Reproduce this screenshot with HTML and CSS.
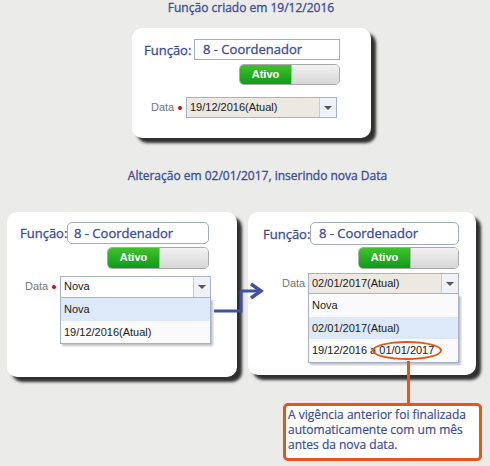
FILE: index.html
```html
<html>
  <head>
    <link rel="stylesheet" href="styles.css">
  </head>
  <body>
    <h1 class="caption caption-first">Função criado em 19/12/2016</h1>

    <section class="card card-first">
      <div class="row">
        <span class="field-label">Função:</span>
        <div class="field-input">8 - Coordenador</div>
      </div>
      <div class="switch">
        <span class="switch-on">Ativo</span>
        <span class="switch-knob"></span>
      </div>
      <div class="row data-row">
        <span class="data-label">Data <i class="required"></i></span>
        <div class="combo">
          <div class="select select-locked">
            <span class="select-text">19/12/2016(Atual)</span>
            <span class="select-btn"><b></b></span>
          </div>
        </div>
      </div>
    </section>

    <h2 class="caption caption-second">Alteração em 02/01/2017, inserindo nova Data</h2>

    <div class="pair">
      <section class="card card-left">
        <div class="row">
          <span class="field-label">Função:</span>
          <div class="field-input">8 - Coordenador</div>
        </div>
        <div class="switch">
          <span class="switch-on">Ativo</span>
          <span class="switch-knob"></span>
        </div>
        <div class="row data-row">
          <span class="data-label">Data <i class="required"></i></span>
          <div class="combo">
            <div class="select">
              <span class="select-text">Nova</span>
              <span class="select-btn"><b></b></span>
            </div>
            <ul class="options">
              <li class="picked">Nova</li>
              <li>19/12/2016(Atual)</li>
            </ul>
          </div>
        </div>
      </section>

      <section class="card card-right">
        <div class="row">
          <span class="field-label">Função:</span>
          <div class="field-input">8 - Coordenador</div>
        </div>
        <div class="switch">
          <span class="switch-on">Ativo</span>
          <span class="switch-knob"></span>
        </div>
        <div class="row data-row">
          <span class="data-label">Data <i class="required"></i></span>
          <div class="combo">
            <div class="select select-locked">
              <span class="select-text">02/01/2017(Atual)</span>
              <span class="select-btn"><b></b></span>
            </div>
            <ul class="options">
              <li>Nova</li>
              <li class="picked">02/01/2017(Atual)</li>
              <li>19/12/2016 a <span class="circled">01/01/2017</span></li>
            </ul>
          </div>
        </div>
      </section>

      <svg class="link-arrow" width="60" height="30" viewBox="0 0 60 30">
        <polyline points="0,24 27,24 27,4 46,4" fill="none" stroke="#3f51a0" stroke-width="3" />
        <polyline points="37,-3 47,4 37,11" fill="none" stroke="#3f51a0" stroke-width="3.4" />
      </svg>
    </div>

    <div class="note">
      A vigência anterior foi finalizada automaticamente com um mês antes da nova data.
    </div>
  </body>
</html>
```

FILE: styles.css
```css
body {
  margin: 0;
  height: 466px;
  overflow: hidden;
  background: #ebebea;
  font-family: "Liberation Sans", Arial, sans-serif;
}

.caption {
  margin: 0;
  font: 12px/15px "Open Sans", sans-serif;
  -webkit-text-stroke: 0.3px #3a4b9a;
  color: #3a4b9a;
  text-align: center;
}
.caption-first {
  padding-left: 12px;
}
.caption-second {
  margin-top: 30px;
  padding-left: 25px;
}

/* cards */
.card {
  box-sizing: border-box;
  background: #fff;
  border-radius: 10px;
  box-shadow: 5px 5px 3px rgba(0, 0, 0, 0.8);
}
.card-first {
  width: 239px;
  height: 110px;
  margin: 13px 0 0 132px;
  padding: 11px 0 0 12px;
}
.pair {
  position: relative;
  display: flex;
  align-items: flex-start;
  gap: 11px;
  margin-top: 29px;
  padding-left: 7px;
}
.card-left {
  width: 230px;
  height: 165px;
  padding: 10px 0 0 13px;
}
.card-right {
  width: 228px;
  height: 163px;
  padding: 10px 0 0 15px;
}

.row {
  display: flex;
  align-items: center;
}

.field-label {
  width: 50px;
  font: 13px "Open Sans", sans-serif;
  -webkit-text-stroke: 0.3px #3a4b9a;
  color: #3a4b9a;
}
.card-left .field-label,
.card-right .field-label {
  width: 47px;
}
.field-input {
  box-sizing: border-box;
  width: 146px;
  height: 21px;
  padding-left: 8px;
  border: 1px solid #a3abc4;
  font: 13px/19px "Open Sans", sans-serif;
  -webkit-text-stroke: 0.3px #3a4b9a;
  color: #3a4b9a;
}
.card-left .field-input {
  width: 142px;
  height: 22px;
  padding-left: 6px;
  line-height: 20px;
  border-radius: 5px;
}
.card-right .field-input {
  width: 149px;
  height: 23px;
  line-height: 21px;
  border-radius: 5px;
}

/* on/off switch */
.switch {
  box-sizing: border-box;
  display: flex;
  width: 101px;
  height: 21px;
  margin: 4px 0 0 95px;
  border: 1px solid #a9a9a9;
  border-radius: 5px;
  overflow: hidden;
}
.card-left .switch {
  width: 102px;
  height: 22px;
  margin: 3px 0 0 87px;
}
.card-right .switch {
  width: 101px;
  height: 22px;
  margin: 2px 0 0 95px;
}
.switch-on {
  width: 51px;
  background: linear-gradient(#41c22c, #109a1b);
  color: #fff;
  font: bold 11px/19px "Liberation Sans", Arial, sans-serif;
  text-align: center;
}
.switch-knob {
  flex: 1;
  border-left: 1px solid #b5b5b5;
  background: linear-gradient(#f2f2f2, #d6d6d6);
}

/* data select */
.data-row {
  align-items: flex-start;
  margin-top: 12px;
}
.card-left .data-row {
  margin-top: 7px;
}
.card-right .data-row {
  margin-top: 4px;
}
.data-label {
  box-sizing: border-box;
  flex: none;
  width: 42px;
  padding-left: 7px;
  white-space: nowrap;
  font-size: 11px;
  line-height: 21px;
  color: #777;
}
.card-left .data-label {
  width: 40px;
  padding-left: 5px;
}
.card-right .data-label {
  width: 45px;
  padding-left: 19px;
}
.required {
  display: inline-block;
  width: 4px;
  height: 4px;
  margin-left: 1px;
  border-radius: 50%;
  background: #e8000b;
  vertical-align: middle;
}

.combo {
  width: 151px;
}
.select {
  box-sizing: border-box;
  display: flex;
  height: 21px;
  border: 1px solid #a7b1c8;
  background: #fff;
}
.card-left .select {
  height: 22px;
}
.select-locked {
  background: #ebe9e2;
}
.select-text {
  flex: 1;
  padding-left: 3px;
  font-size: 11px;
  line-height: 19px;
  color: #222;
}
.select-btn {
  display: flex;
  align-items: center;
  justify-content: center;
  width: 16px;
  border-left: 1px solid #c3cadb;
  background: #eef2fa;
}
.select-btn b {
  border-top: 4px solid #555;
  border-left: 4px solid transparent;
  border-right: 4px solid transparent;
}

.options {
  margin: 0;
  padding: 0;
  list-style: none;
  border: 1px solid #a7b1c8;
  border-top: none;
  background: #fafafa;
  box-shadow: 2px 2px 2px rgba(0, 0, 0, 0.25);
}
.options li {
  height: 22.5px;
  padding-left: 3px;
  font-size: 11px;
  line-height: 22.5px;
  color: #222;
}
.options .picked {
  background: #dde9f8;
}
.circled {
  position: relative;
}
.circled::after {
  content: "";
  position: absolute;
  left: -7px;
  right: -8px;
  top: -3px;
  bottom: -4px;
  border: 2px solid #e2571b;
  border-radius: 50%;
}

.link-arrow {
  position: absolute;
  left: 214px;
  top: 75px;
  overflow: visible;
}

/* callout */
.note {
  position: relative;
  box-sizing: border-box;
  width: 199px;
  height: 58px;
  margin: 26px 0 0 283px;
  padding: 1px 0 0 2px;
  border: 3px solid #e2571b;
  border-radius: 5px;
  background: #fff;
  font: 12px/15px "Open Sans", sans-serif;
  -webkit-text-stroke: 0.2px #3a4b9a;
  color: #3a4b9a;
}
.note::before {
  content: "";
  position: absolute;
  left: 121px;
  top: -45px;
  width: 3px;
  height: 42px;
  background: #e2571b;
}
```
